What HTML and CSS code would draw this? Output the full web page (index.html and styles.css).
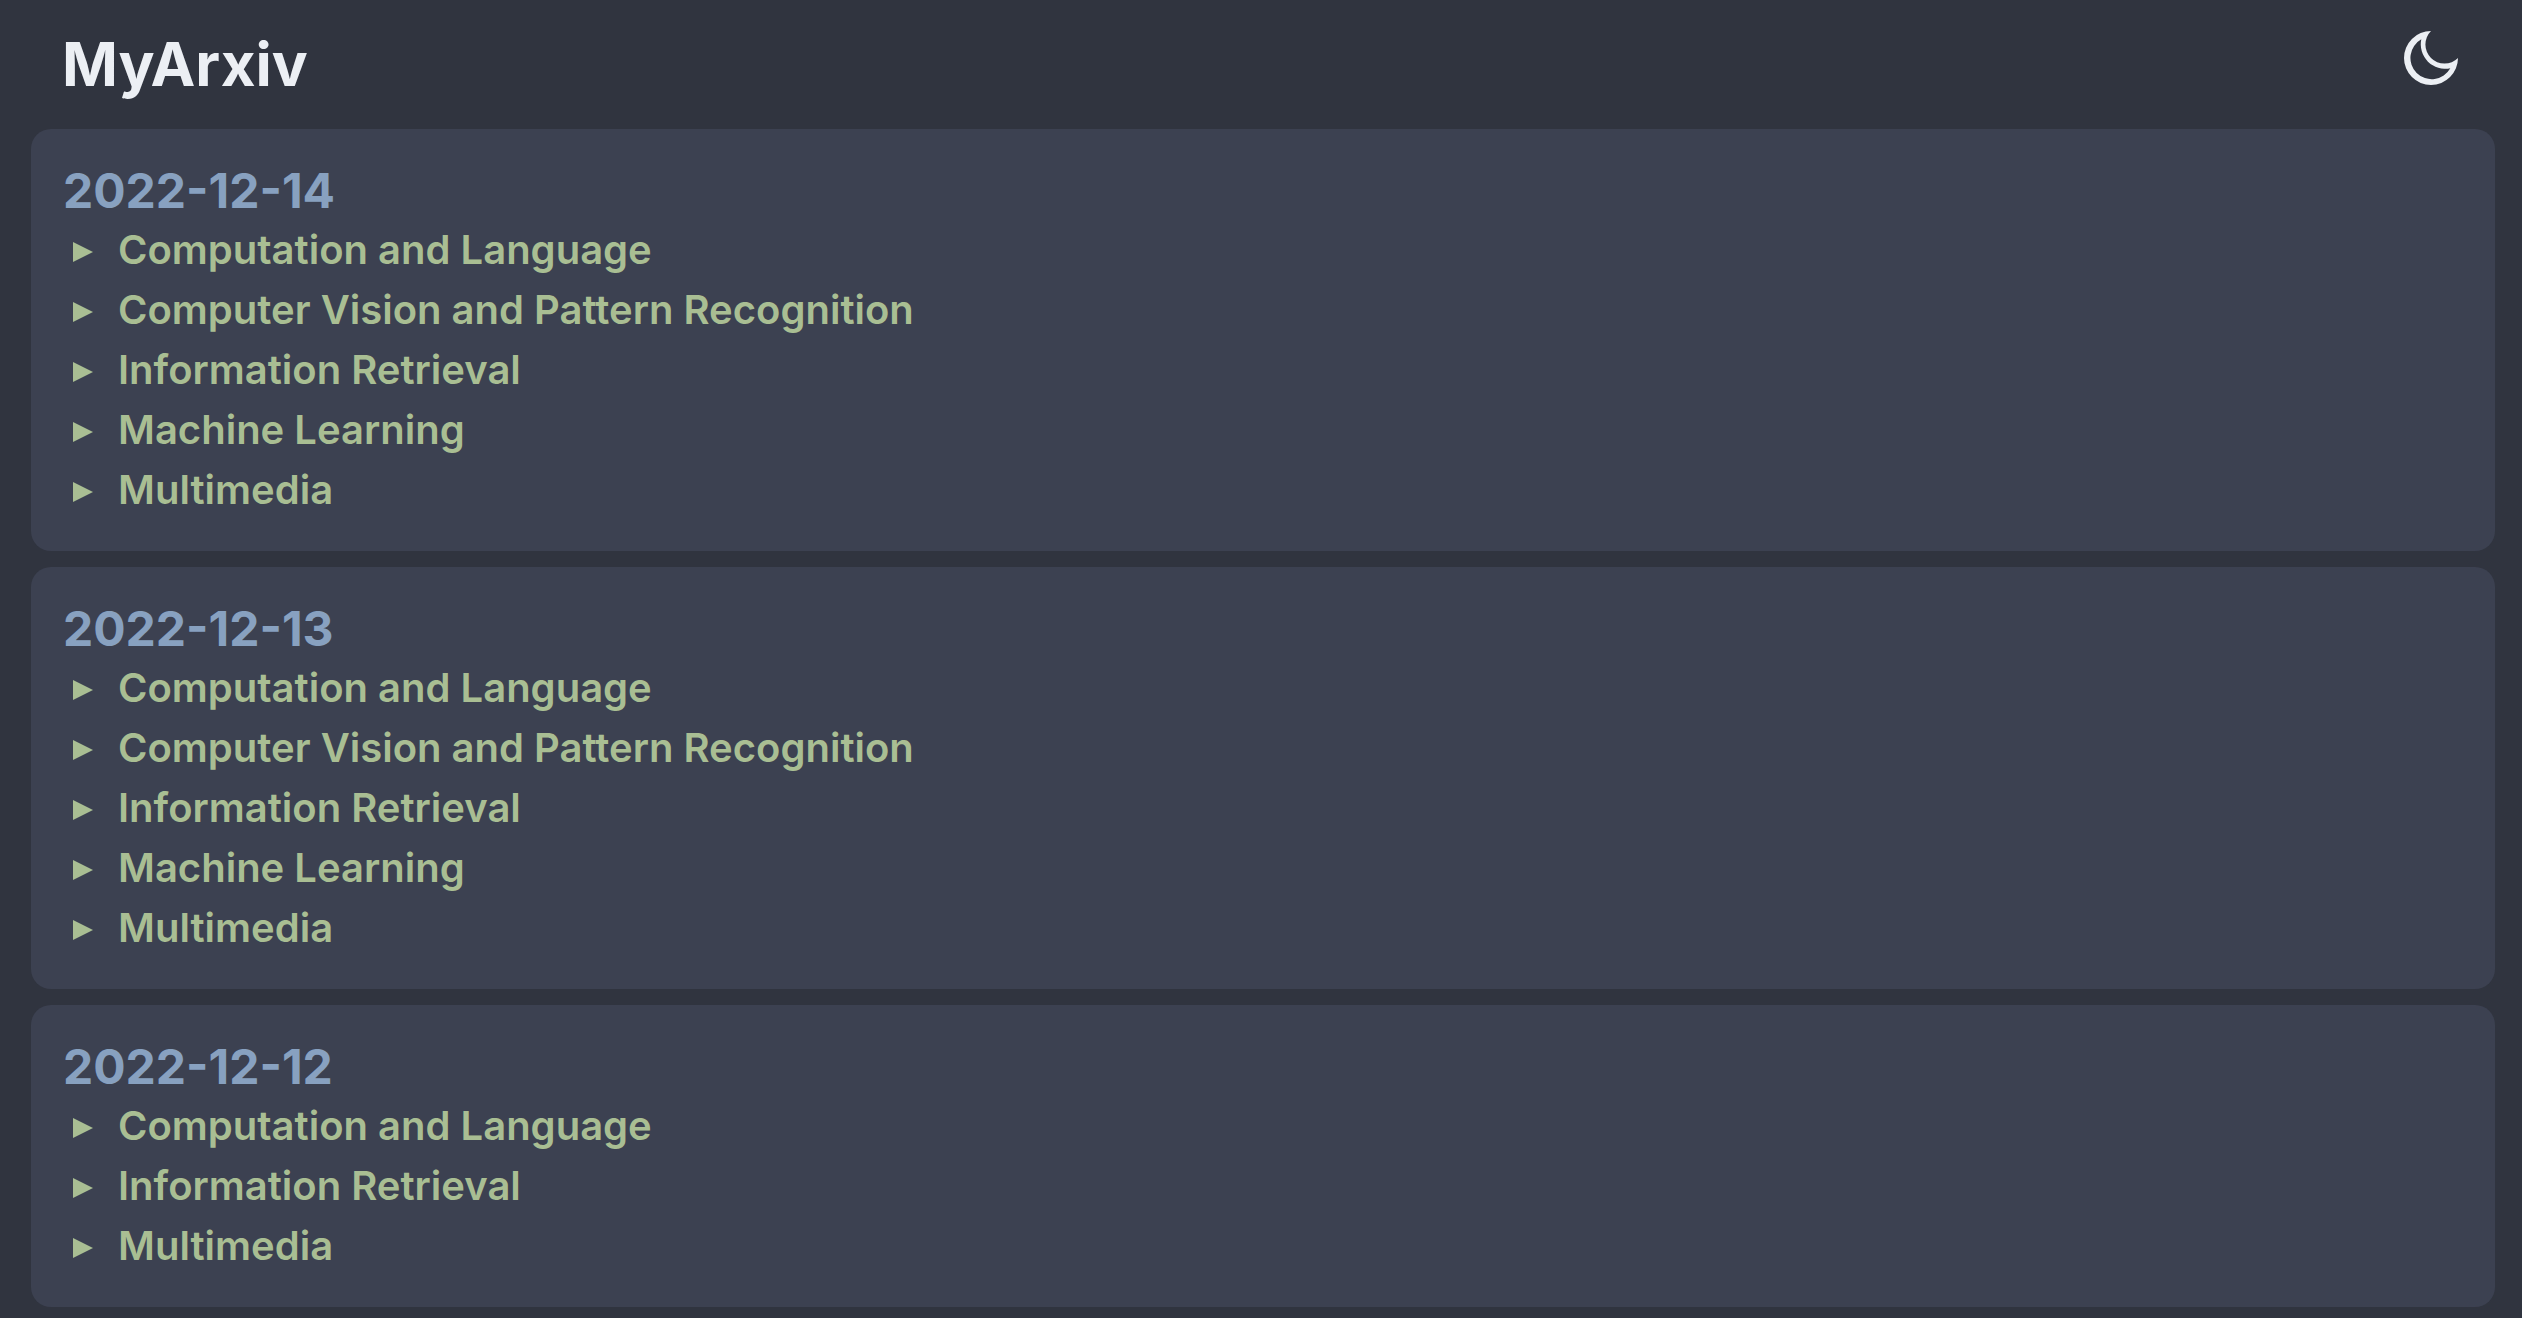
FILE: index.html
```html
<!DOCTYPE html>
<html lang="en">
<head>
<meta charset="utf-8">
<meta name="viewport" content="width=device-width, initial-scale=1">
<title>MyArxiv</title>
<link rel="stylesheet" href="styles.css">
</head>
<body>
<header class="header">
  <h1 class="title">MyArxiv</h1>
  <button class="theme-toggle" type="button" aria-label="Toggle theme">
    <svg viewBox="0 0 54 54" fill="currentColor" fill-rule="evenodd" aria-hidden="true"><path d="M27 0A27 27 0 1 0 54 27A19 19 0 0 1 27 0ZM17.300 8.300A21.300 21.300 0 1 0 46.300 37.300A24.500 24.500 0 0 1 17.300 8.300Z"/></svg>
  </button>
</header>
<main class="days">
  <section class="day">
    <h2 class="date">2022-12-14</h2>
    <details class="subject"><summary>Computation and Language</summary></details>
    <details class="subject"><summary>Computer Vision and Pattern Recognition</summary></details>
    <details class="subject"><summary>Information Retrieval</summary></details>
    <details class="subject"><summary>Machine Learning</summary></details>
    <details class="subject"><summary>Multimedia</summary></details>
  </section>
  <section class="day">
    <h2 class="date">2022-12-13</h2>
    <details class="subject"><summary>Computation and Language</summary></details>
    <details class="subject"><summary>Computer Vision and Pattern Recognition</summary></details>
    <details class="subject"><summary>Information Retrieval</summary></details>
    <details class="subject"><summary>Machine Learning</summary></details>
    <details class="subject"><summary>Multimedia</summary></details>
  </section>
  <section class="day">
    <h2 class="date">2022-12-12</h2>
    <details class="subject"><summary>Computation and Language</summary></details>
    <details class="subject"><summary>Information Retrieval</summary></details>
    <details class="subject"><summary>Multimedia</summary></details>
  </section>
</main>
</body>
</html>
```

FILE: styles.css
```css
* { box-sizing: border-box; }

body {
  margin: 0;
  padding: 0 27px 11px 31px;
  background: #30343f;
  color: #eceff4;
  font-family: Inter, "Liberation Sans", sans-serif;
}

.header {
  display: flex;
  align-items: flex-start;
  justify-content: space-between;
  padding: 24px 37px 25px 31px;
}

.title {
  margin: 0;
  font-size: 60px;
  line-height: 80px;
  font-weight: 700;
}

.theme-toggle {
  width: 54px;
  height: 54px;
  margin-top: 7px;
  padding: 0;
  border: 0;
  background: none;
  color: inherit;
  cursor: pointer;
}

.theme-toggle svg { display: block; width: 100%; height: 100%; }

.days {
  display: flex;
  flex-direction: column;
  gap: 16px;
}

.day {
  padding: 33px 32px 31px;
  border-radius: 20px;
  background: #3c4151;
}

.date {
  margin: 0;
  color: #88a1c0;
  font-size: 48px;
  line-height: 58px;
  font-weight: 700;
}

.subject {
  color: #a9be93;
  font-size: 40px;
  line-height: 60px;
  font-weight: 600;
}

.subject summary {
  display: flex;
  align-items: center;
  list-style: none;
  cursor: pointer;
}

.subject summary::before {
  content: "";
  width: 20px;
  height: 20px;
  margin: 4px 25px 0 10px;
  background: currentColor;
  clip-path: polygon(0 0, 100% 50%, 0 100%);
}
```
